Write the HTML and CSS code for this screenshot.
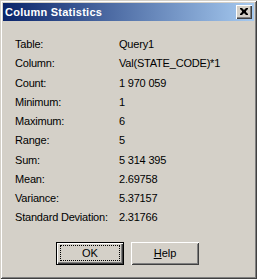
FILE: index.html
```html
<!DOCTYPE html>
<html lang="en">
<head>
    <meta charset="UTF-8">
    <meta name="viewport" content="width=device-width, initial-scale=1.0">
    <title>Column Statistics</title>
    <link rel="stylesheet" href="styles.css">
</head>
<body>

    <div class="window">
        <div class="titlebar">
            <span class="title">Column Statistics</span>
            <div class="close-btn">
                <svg width="8" height="7" viewBox="0 0 8 7">
                    <path d="M0 0h2l2 2 2-2h2v1l-2 2v1l2 2v1h-2l-2-2-2 2h-2v-1l2-2v-1l-2-2z" fill="#000"/>
                </svg>
            </div>
        </div>

        <!-- Statistic rows -->
        <div class="stats">
            <span class="label">Table:</span><span class="value">Query1</span>
            <span class="label">Column:</span><span class="value">Val(STATE_CODE)*1</span>
            <span class="label">Count:</span><span class="value">1 970 059</span>
            <span class="label">Minimum:</span><span class="value">1</span>
            <span class="label">Maximum:</span><span class="value">6</span>
            <span class="label">Range:</span><span class="value">5</span>
            <span class="label">Sum:</span><span class="value">5 314 395</span>
            <span class="label">Mean:</span><span class="value">2.69758</span>
            <span class="label">Variance:</span><span class="value">5.37157</span>
            <span class="label">Standard Deviation:</span><span class="value">2.31766</span>
        </div>

        <div class="buttons">
            <div class="btn default"><span class="focus">OK</span></div>
            <div class="btn"><span><u>H</u>elp</span></div>
        </div>
    </div>

</body>
</html>
```

FILE: styles.css
```css
body {
    margin: 0;
    padding: 0;
    background-color: #d4d0c8;
    font-family: "Liberation Sans", Arial, sans-serif;
    font-size: 11px;
    color: #000;
}

.window {
    box-sizing: border-box;
    width: 257px;
    height: 279px;
    padding: 3px;
    background-color: #d4d0c8;
    /* classic 3D window frame */
    box-shadow: inset 1px 1px 0 #d4d0c8, inset -1px -1px 0 #404040,
                inset 2px 2px 0 #ffffff, inset -2px -2px 0 #808080;
}

.titlebar {
    height: 18px;
    display: flex;
    align-items: center;
    justify-content: space-between;
    padding: 0 2px;
    background: linear-gradient(to right, #0a246a, #a6caf0);
}

.title {
    color: #fff;
    font-weight: bold;
    font-size: 11px;
    letter-spacing: 0.25px;
    line-height: 18px;
}

.close-btn {
    box-sizing: border-box;
    width: 16px;
    height: 14px;
    display: flex;
    align-items: center;
    justify-content: center;
    background-color: #d4d0c8;
    box-shadow: inset 1px 1px 0 #fff, inset -1px -1px 0 #404040,
                inset -2px -2px 0 #808080;
}

.close-btn svg {
    display: block;
    margin-top: -1px;
}

.stats {
    display: grid;
    grid-template-columns: 104px auto;
    grid-auto-rows: 19.25px;
    padding: 14px 0 0 12px;
    line-height: 19.25px;
    letter-spacing: -0.2px;
}

.buttons {
    display: flex;
    gap: 7px;
    margin-top: 14px;
    padding-left: 53px;
}

.btn {
    box-sizing: border-box;
    width: 68px;
    height: 23px;
    display: flex;
    align-items: center;
    justify-content: center;
    line-height: 13px;
    box-shadow: inset 1px 1px 0 #fff, inset -1px -1px 0 #404040,
                inset 2px 2px 0 #d4d0c8, inset -2px -2px 0 #808080;
}

.btn.default {
    border: 1px solid #000;
    box-shadow: inset 1px 1px 0 #fff, inset -1px -1px 0 #404040,
                inset -2px -2px 0 #808080;
}

.focus {
    box-sizing: border-box;
    width: 60px;
    height: 16px;
    line-height: 14px;
    text-align: center;
    border: 1px dotted #000;
}
```
